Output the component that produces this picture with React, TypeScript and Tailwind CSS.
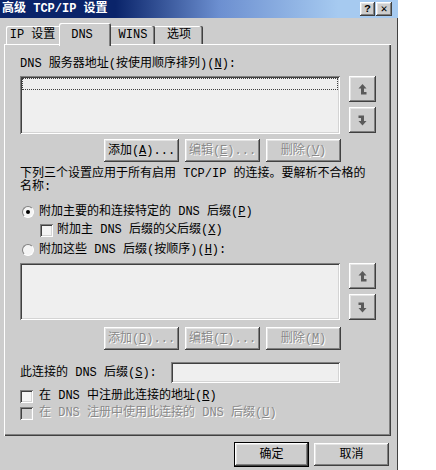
import React from 'react'

const raised =
  'shadow-[inset_-1px_-1px_#404040,inset_1px_1px_#ffffff,inset_-2px_-2px_#808080,inset_2px_2px_#e4e4e4]'
const sunken =
  'shadow-[inset_1px_1px_#808080,inset_-1px_-1px_#ffffff,inset_2px_2px_#404040,inset_-2px_-2px_#d4d4d4]'
const dim = 'text-[#8a8a8a] [text-shadow:1px_1px_0_#ffffff]'

function Btn({ children, disabled, w = 'w-[75px]' }: { children: React.ReactNode; disabled?: boolean; w?: string }) {
  return (
    <div className={`flex h-[23px] ${w} items-center justify-center bg-[#cdcdcd] ${raised} ${disabled ? dim : 'text-black'}`}>
      {children}
    </div>
  )
}

function UpIcon() {
  return (
    <svg width="9" height="11" viewBox="0 0 9 11" className="fill-[#5a5a5a]">
      <path d="M4.5 0 L8.5 4.5 H6 V8 H8.5 V10.5 H3 V4.5 H0.5 Z" />
    </svg>
  )
}

function DownIcon() {
  return (
    <svg width="9" height="11" viewBox="0 0 9 11" className="fill-[#5a5a5a]">
      <path d="M0.5 0.5 H6 V6 H8.5 L4.5 10.5 L0.5 6 H3 V3 H0.5 Z" />
    </svg>
  )
}

function ListRow({ focused, h }: { focused?: boolean; h: string }) {
  return (
    <div className={`flex ${h}`}>
      <div className={`ml-[16px] w-[320px] h-full bg-[#efefef] ${sunken} p-[2px]`}>
        {focused && <div className="h-[12px] border border-dotted border-[#404040]" />}
      </div>
      <div className="ml-[9px] flex flex-col gap-[5px]">
        <div className={`flex h-[26px] w-[27px] items-center justify-center bg-[#cdcdcd] ${raised}`}>
          <UpIcon />
        </div>
        <div className={`flex h-[26px] w-[27px] items-center justify-center bg-[#cdcdcd] ${raised}`}>
          <DownIcon />
        </div>
      </div>
    </div>
  )
}

function Check({ disabled }: { disabled?: boolean }) {
  return (
    <div className={`h-[13px] w-[13px] ${disabled ? 'bg-[#cdcdcd]' : 'bg-[#f4f4f4]'} ${sunken}`} />
  )
}

function Radio({ checked }: { checked?: boolean }) {
  return (
    <div className="relative h-[12px] w-[12px] rounded-full border border-t-[#808080] border-l-[#808080] border-r-white border-b-white bg-[#f4f4f4]">
      {checked && <div className="absolute left-[3px] top-[3px] h-[4px] w-[4px] rounded-full bg-black" />}
    </div>
  )
}

export default function App() {
  return (
    <div
      className="h-[470px] w-[436px] overflow-hidden bg-white text-[12px] leading-[12px] text-black"
      style={{ fontFamily: '"Liberation Mono", "Noto Sans CJK SC", monospace' }}
    >
      <div className="flex h-full w-[398px] flex-col bg-[#cdcdcd] shadow-[inset_-1px_0_#404040]">
        {/* title bar */}
        <div className="flex h-[18px] items-center bg-[linear-gradient(to_right,#0a246a_0%,#0a246a_29%,#6c8fd0_55%,#a6caf0_85%)] pl-[2px] pr-[6px]">
          <span className="font-bold text-white">高级 TCP/IP 设置</span>
          <div className="ml-auto flex gap-[1px]">
            <div className={`flex h-[14px] w-[15px] items-center justify-center bg-[#cdcdcd] font-bold text-[11px] ${raised}`}>?</div>
            <div className={`flex h-[14px] w-[16px] items-center justify-center bg-[#cdcdcd] font-bold text-[11px] ${raised}`}>✕</div>
          </div>
        </div>

        {/* tabs */}
        <div className="mt-[4px] flex h-[22px] items-end pl-[6px]">
          <div className="flex h-[18px] w-[53px] items-center justify-center rounded-tl-[2px] shadow-[inset_1px_1px_#ffffff]">IP 设置</div>
          <div className="relative z-10 -mb-[2px] flex h-[23px] w-[52px] items-start justify-center rounded-t-[2px] bg-[#cdcdcd] pt-[6px] pr-[6px] shadow-[inset_1px_1px_#ffffff,inset_-1px_0_#404040,inset_-2px_0_#808080]">
            DNS
          </div>
          <div className="flex h-[18px] w-[44px] items-center justify-center rounded-tr-[2px] shadow-[inset_-1px_0_#404040,inset_-2px_0_#808080,inset_0_1px_#ffffff]">WINS</div>
          <div className="flex h-[18px] w-[48px] items-center justify-center rounded-tr-[2px] shadow-[inset_-1px_0_#404040,inset_-2px_0_#808080,inset_0_1px_#ffffff]">选项</div>
        </div>

        {/* panel */}
        <div className="ml-[4px] flex h-[392px] w-[387px] flex-col shadow-[inset_1px_1px_#ffffff,inset_-1px_-1px_#404040,inset_-2px_-2px_#808080]">
          <div className="ml-[16px] mt-[14px] h-[12px]">
            DNS 服务器地址(按使用顺序排列)(<u>N</u>):
          </div>
          <div className="mt-[6px]">
            <ListRow focused h="h-[58px]" />
          </div>
          <div className="mt-[5px] flex gap-[6px] pl-[100px]">
            <Btn>添加(<u>A</u>)...</Btn>
            <Btn disabled>编辑(<u>E</u>)...</Btn>
            <Btn disabled>删除(<u>V</u>)</Btn>
          </div>
          <p className="ml-[16px] mt-[6px] w-[350px] leading-[13px]">
            下列三个设置应用于所有启用 TCP/IP 的连接。要解析不合格的名称:
          </p>
          <div className="ml-[18px] mt-[11px] flex h-[14px] items-center gap-[5px]">
            <Radio checked />
            <span>附加主要的和连接特定的 DNS 后缀(<u>P</u>)</span>
          </div>
          <div className="ml-[36px] mt-[4px] flex h-[14px] items-center gap-[4px]">
            <Check />
            <span>附加主 DNS 后缀的父后缀(<u>X</u>)</span>
          </div>
          <div className="ml-[18px] mt-[6px] flex h-[14px] items-center gap-[5px]">
            <Radio />
            <span>附加这些 DNS 后缀(按顺序)(<u>H</u>):</span>
          </div>
          <div className="mt-[6px]">
            <ListRow h="h-[57px]" />
          </div>
          <div className="mt-[7px] flex gap-[6px] pl-[100px]">
            <Btn disabled>添加(<u>D</u>)...</Btn>
            <Btn disabled>编辑(<u>T</u>)...</Btn>
            <Btn disabled>删除(<u>M</u>)</Btn>
          </div>
          <div className="ml-[16px] mt-[12px] flex h-[21px] items-center">
            <span className="w-[151px]">此连接的 DNS 后缀(<u>S</u>):</span>
            <div className={`h-[21px] w-[169px] bg-[#efefef] ${sunken}`} />
          </div>
          <div className="ml-[16px] mt-[6px] flex h-[14px] items-center gap-[6px]">
            <Check />
            <span>在 DNS 中注册此连接的地址(<u>R</u>)</span>
          </div>
          <div className="ml-[16px] mt-[3px] flex h-[14px] items-center gap-[6px]">
            <Check disabled />
            <span className={dim}>在 DNS 注册中使用此连接的 DNS 后缀(<u>U</u>)</span>
          </div>
        </div>

        {/* bottom buttons */}
        <div className="mt-[7px] flex gap-[6px] pl-[235px]">
          <div className="outline outline-1 outline-black">
            <Btn w="w-[73px]">确定</Btn>
          </div>
          <Btn>取消</Btn>
        </div>
      </div>
    </div>
  )
}
